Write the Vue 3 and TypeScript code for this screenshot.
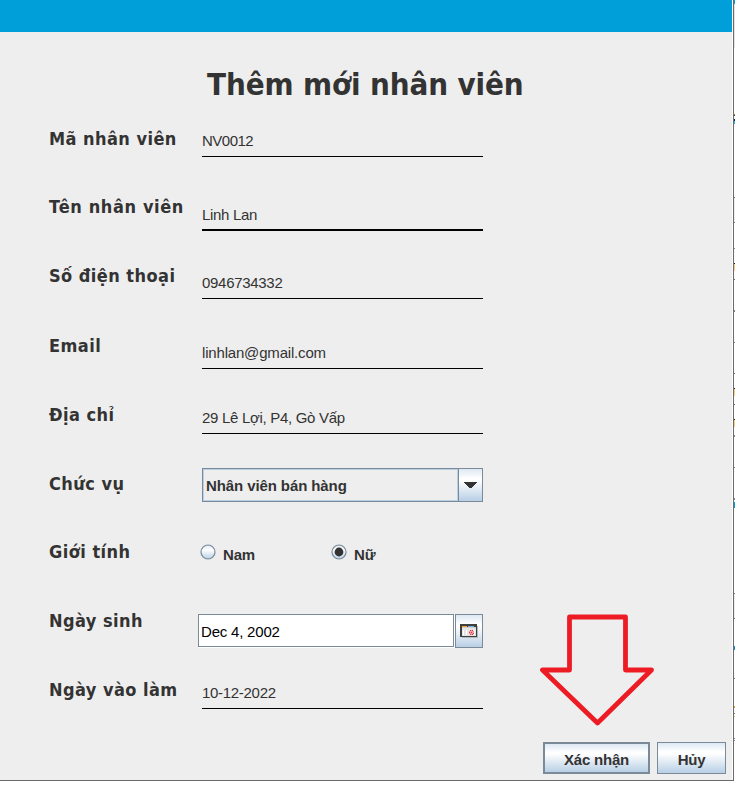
<script setup lang="ts">
interface Field {
  id: string
  label: string
  kind: 'text' | 'select' | 'radio' | 'date'
  value: string
}

const fields: Field[] = [
  { id: 'code', label: 'Mã nhân viên', kind: 'text', value: 'NV0012' },
  { id: 'name', label: 'Tên nhân viên', kind: 'text', value: 'Linh Lan' },
  { id: 'phone', label: 'Số điện thoại', kind: 'text', value: '0946734332' },
  { id: 'email', label: 'Email', kind: 'text', value: 'linhlan@gmail.com' },
  { id: 'address', label: 'Địa chỉ', kind: 'text', value: '29 Lê Lợi, P4, Gò Vấp' },
  { id: 'role', label: 'Chức vụ', kind: 'select', value: 'Nhân viên bán hàng' },
  { id: 'gender', label: 'Giới tính', kind: 'radio', value: 'Nữ' },
  { id: 'birth', label: 'Ngày sinh', kind: 'date', value: 'Dec 4, 2002' },
  { id: 'start', label: 'Ngày vào làm', kind: 'text', value: '10-12-2022' },
]
const genders = ['Nam', 'Nữ']

// Slivers of the window behind the dialog: top, height, colour
const slivers: [number, number, string][] = [
  [0, 4, '#0b9bd3'], [4, 44, '#e4e4e4'], [114, 1, '#c47a20'], [115, 1, '#333'], [119, 2, '#123'],
  [121, 3, '#35b5ea'], [197, 1, '#777'], [198, 24, '#eee'], [222, 1, '#7a8a99'], [248, 1, '#7a8a99'],
  [263, 1, '#222'], [264, 7, '#f6cf85'], [279, 1, '#777'], [310, 2, '#7a8a99'], [342, 1, '#7a8a99'],
  [373, 1, '#777'], [388, 1, '#222'], [389, 7, '#f6cf85'], [404, 1, '#777'], [419, 1, '#222'],
  [420, 7, '#f6cf85'], [435, 2, '#7a8a99'], [467, 1, '#7a8a99'], [498, 2, '#7a8a99'],
  [502, 6, '#009fda'], [593, 1, '#7a8a99'], [594, 24, '#eee'], [618, 1, '#777'], [646, 4, '#1683cb'],
  [678, 1, '#7a8a99'], [706, 2, '#d89b35'], [713, 1, '#777'], [716, 1, '#f0c070'],
  [738, 1, '#7a8a99'], [740, 1, '#7a8a99'],
]
</script>

<template>
  <div class="screen">
    <main class="dialog">
      <header class="bar"></header>
      <h1><span>Thêm mới nhân viên</span></h1>
      <form class="form">
        <div v-for="f in fields" :key="f.id" class="row" :class="f.id">
          <span class="label">{{ f.label }}</span>
          <div v-if="f.kind === 'text'" class="input"><span>{{ f.value }}</span></div>
          <div v-else-if="f.kind === 'select'" class="select">
            <div class="chosen"><span>{{ f.value }}</span></div>
            <div class="arrow">
              <svg width="14" height="7" viewBox="0 0 14 7" shape-rendering="crispEdges"><path d="M0 0H13V1H12V2H11V3H10V4H9V5H8V6H5V5H4V4H3V3H2V2H1V1H0Z" fill="#333" /></svg>
            </div>
          </div>
          <div v-else-if="f.kind === 'radio'" class="radios">
            <div v-for="g in genders" :key="g" class="radio">
              <svg width="16" height="16" viewBox="0 0 16 16">
                <defs><linearGradient id="knob" x2="0" y2="1"><stop offset="0" stop-color="#dde8f3" /><stop offset=".35" stop-color="#fff" /><stop offset="1" stop-color="#b8cfe5" /></linearGradient></defs>
                <circle cx="8" cy="8" r="7" fill="url(#knob)" stroke="#7a8a99" stroke-width="1.2" />
                <circle v-if="g === f.value" cx="8" cy="8" r="4.4" fill="#333" />
              </svg>
              <span>{{ g }}</span>
            </div>
          </div>
          <div v-else class="date">
            <div class="datebox"><span>{{ f.value }}</span></div>
            <div class="picker">
              <svg width="18" height="14" viewBox="0 0 18 14" shape-rendering="crispEdges">
                <path d="M2 2H18V14H2Z" fill="#b4b8bd" />
                <path d="M0 0H17V13H0Z" fill="#3d403f" />
                <path d="M2 4H16V12H2Z" fill="#e4e4e4" />
                <path d="M2 2H7V3H2Z" fill="#f5a623" /><path d="M8 2H14V3H8Z" fill="#79aee5" />
                <path d="M2 3H16V4H2Z" fill="#ccc" />
                <path d="M3 6H4V11H3ZM6 6H7V11H6ZM14 6H15V11H14Z" fill="#fff" />
                <path d="M9 7H10V6H13V7H14V10H13V11H10V10H9Z" fill="#ee9aa0" />
                <path d="M10 6H11V7H10ZM12 6H13V7H12ZM9 8H10V9H9ZM13 9H14V10H13ZM11 8H12V9H11ZM10 10H11V11H10ZM12 10H13V11H12Z" fill="#dc3848" />
              </svg>
            </div>
          </div>
        </div>
      </form>
      <footer class="actions">
        <button type="button" class="btn primary">Xác nhận</button>
        <button type="button" class="btn">Hủy</button>
      </footer>
      <svg class="pointer" width="116" height="114" viewBox="0 0 116 114">
        <path d="M30.5 5H86.5V58H112.5L58.5 111L3.5 58H30.5Z" fill="none" stroke="#ed1c24" stroke-width="4.8" stroke-linejoin="round" />
      </svg>
    </main>
    <aside class="behind">
      <i v-for="s in slivers" :key="s[0]" :style="{ top: s[0] + 'px', height: s[1] + 'px', background: s[2] }"></i>
    </aside>
  </div>
</template>

<style>
body { margin: 0; background: #fff; }
</style>

<style scoped>
.screen { display: flex; width: 735px; height: 785px; overflow: hidden; background: #fff; font-family: "Liberation Sans", Arial, sans-serif; color: #333; }
.dialog { position: relative; box-sizing: border-box; width: 734px; height: 781px; display: flex; flex-direction: column; background: #eee; border-right: 1px solid #6b6b6b; border-bottom: 1px solid #6b6b6b; box-shadow: inset -1px 0 #fff; }
.bar { height: 32px; width: 732px; background: #009fda; flex: none; }
h1 { height: 72px; margin: 0; padding: 33px 0 0 207px; box-sizing: border-box; font: bold 31px/38px "DejaVu Sans Condensed", "DejaVu Sans", sans-serif; font-stretch: condensed; letter-spacing: -.12px; white-space: nowrap; }
.form { display: flex; flex-direction: column; }
.row { display: grid; grid-template-columns: 153px 300px; height: 69px; padding-left: 49px; align-items: start; }
.label { font: bold 18px/24px "DejaVu Sans Condensed", "DejaVu Sans", sans-serif; font-stretch: condensed; letter-spacing: .45px; margin-top: 22px; white-space: nowrap; justify-self: start; }
.name .label { letter-spacing: .6px; }
.code .label, .email .label, .address .label, .role .label { margin-top: 23px; }
.input { width: 281px; height: 53px; box-sizing: border-box; border-bottom: 1px solid #000; display: flex; align-items: flex-end; padding-bottom: 7px; font-size: 15px; letter-spacing: -.3px; line-height: 17px; white-space: nowrap; }
.name .input { height: 58px; border-bottom-width: 2px; padding-bottom: 6px; }
.phone .input { height: 57px; }
.email .input { height: 58px; letter-spacing: -.18px; }
.address .input { height: 54px; }
.code .input { letter-spacing: -.5px; }
.select { display: flex; width: 281px; height: 34px; margin-top: 19px; box-sizing: border-box; border: 1px solid #7a8a99; font-weight: bold; font-size: 15px; letter-spacing: -.1px; }
.chosen { flex: 1; border: 1px solid #b8cfe5; box-sizing: border-box; padding: 0 0 0 2px; line-height: 32px; }
.arrow { width: 24px; box-sizing: border-box; border-left: 1px solid #7a8a99; display: flex; align-items: flex-start; padding: 13px 0 0 5px; background: linear-gradient(#dde8f3, #fff 30%, #fff 35%, #b8cfe5); }
.radios { display: flex; padding-top: 26px; margin-left: -1px; }
.radio { display: flex; align-items: flex-start; gap: 7px; width: 131px; font-weight: bold; font-size: 15px; letter-spacing: -.2px; line-height: 21px; }
.radio svg { flex: none; margin-left: -1px; }
.date { display: flex; gap: 1px; margin: 27px 0 0 -4px; }
.datebox { width: 256px; height: 33px; box-sizing: border-box; border: 1px solid #7a8a99; background: #fff; box-shadow: 1px 1px #fff; color: #000; font-size: 15px; letter-spacing: -.2px; line-height: 34px; padding-left: 2px; }
.picker { width: 28px; height: 34px; box-sizing: border-box; border: 1px solid #7a8a99; padding: 9px 0 0 4px; background: linear-gradient(#dde8f3, #fff 30%, #fff 35%, #b8cfe5); }
.picker svg { display: block; }
.actions { display: flex; gap: 7px; justify-content: flex-end; padding: 17px 7px 0 0; }
.btn { width: 69px; height: 32px; box-sizing: border-box; border: 1px solid #7a8a99; background: linear-gradient(#dde8f3, #fff 30%, #fff 35%, #b8cfe5); font: bold 15px/20px "Liberation Sans", Arial, sans-serif; letter-spacing: -.2px; color: #333; padding: 3px 0 0; margin: 0; }
.primary { width: 107px; border-width: 2px; }
.pointer { position: absolute; left: 539px; top: 612px; }
.behind { position: relative; width: 1px; height: 785px; }
.behind i { position: absolute; left: 0; width: 1px; }
</style>
